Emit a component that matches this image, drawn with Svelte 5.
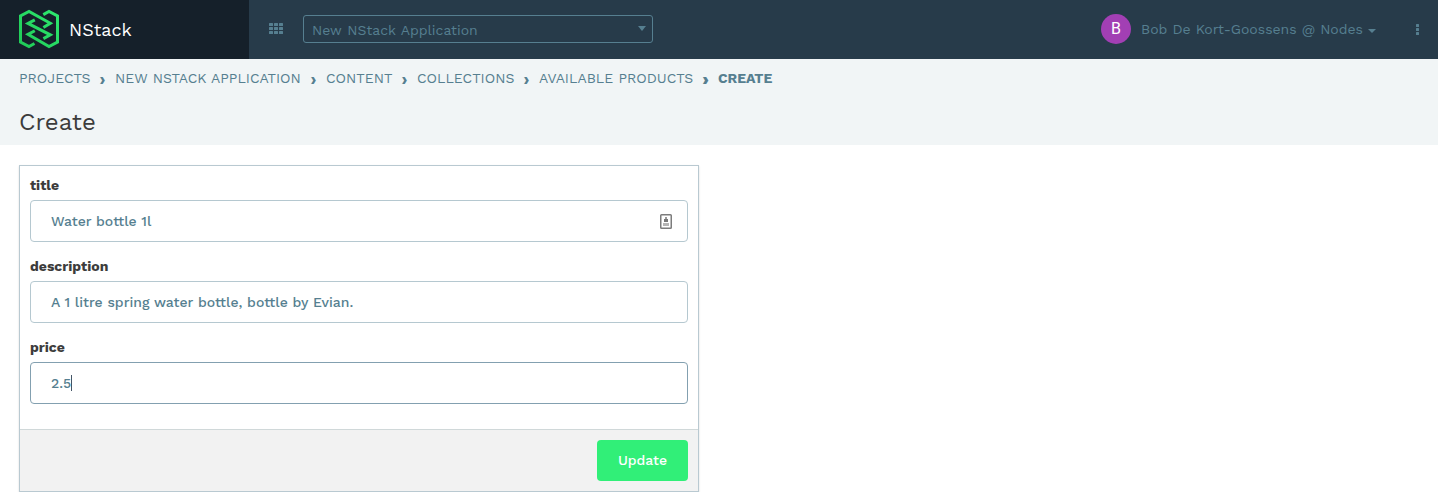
<script>
  const crumbs = [
    { label: 'PROJECTS', width: 71 },
    { label: 'NEW NSTACK APPLICATION', width: 186 },
    { label: 'CONTENT', width: 66 },
    { label: 'COLLECTIONS', width: 97 },
    { label: 'AVAILABLE PRODUCTS', width: 154 },
    { label: 'CREATE', width: 54 }
  ];
</script>

<header class="topbar">
  <div class="brand">
    <svg class="logo" width="42" height="40" viewBox="18 9 42 40" fill="none" stroke-width="3">
      <defs>
        <linearGradient id="green" x1="20" y1="48" x2="58" y2="10" gradientUnits="userSpaceOnUse">
          <stop stop-color="#1fc956" /><stop offset="1" stop-color="#2eea70" />
        </linearGradient>
      </defs>
      <g stroke="url(#green)">
        <path d="M34.5 43.5 29 46.5 20.5 42V15.8L29 11.5 50.3 23.3 43.4 27.5" />
        <path d="M34.8 19.8 28 23.4 50.3 34.9 43.4 38.6" />
        <path d="M34.8 30.7 28 34.4 49 46.5 57.5 42V15.8L49 11.5 43.3 14.6" />
      </g>
    </svg>
    <span class="brand-name">NStack</span>
  </div>
  <svg class="grid" width="14" height="11" viewBox="0 0 14 11" fill="#567f90">
    {#each [0, 4, 8] as y}{#each [0, 5, 10] as x}<rect {x} {y} width="4" height="3" rx=".5" />{/each}{/each}
  </svg>
  <div class="select"><span>New NStack Application</span><i class="caret big"></i></div>
  <div class="user">
    <span class="avatar">B</span>
    <span class="user-name">Bob De Kort-Goossens @ Nodes</span>
    <i class="caret"></i>
  </div>
  <svg class="dots" width="3" height="11" viewBox="0 0 3 11" fill="#567f90">
    {#each [0, 4, 8] as y}<rect {y} width="3" height="3" rx=".5" />{/each}
  </svg>
</header>

<section class="heading">
  <nav>
    {#each crumbs as crumb, i}
      {#if i}<span class="sep" class:heavy={i === 5}>›</span>{/if}
      <span class="crumb" class:strong={i === 5} style:width="{crumb.width}px">{crumb.label}</span>
    {/each}
  </nav>
  <h1>Create</h1>
</section>

<main>
  <div class="panel">
    <div class="fields">
      <div class="label">title</div>
      <div class="input"><span>Water bottle 1l</span>
        <svg class="card" width="12" height="15" viewBox="0 0 12 15">
          <rect x=".75" y=".75" width="10.5" height="13.5" rx=".8" fill="#fff" stroke="#7c7c7c" stroke-width="1.5" />
          <rect x="5" y="3" width="2" height="2" fill="#999" /><rect x="4" y="5" width="4" height="3" fill="#777" />
          <rect x="3" y="9" width="6" height="3" fill="#b4b4b4" />
        </svg>
      </div>
      <div class="label">description</div>
      <div class="input"><span>A 1 litre spring water bottle, bottle by Evian.</span></div>
      <div class="label">price</div>
      <div class="input focus"><span>2.5</span><i class="cursor"></i></div>
    </div>
    <footer><button>Update</button></footer>
  </div>
</main>

<style>
  :global(body) { margin: 0; background: #fff; color: #3c3c3c; font-family: "Work Sans", Inter, sans-serif; font-size: 14px; }
  .topbar { height: 59px; display: flex; align-items: center; background: #273b4a; color: #567f90; }
  .brand { box-sizing: border-box; width: 249px; height: 59px; padding: 0 0 1px 18px; display: flex; align-items: center; background: #15202a; color: #fff; flex: none; }
  .brand-name { font-size: 18px; margin: 1px 0 0 9px; }
  .grid { margin: 0 20px; position: relative; top: -1px; }
  .select { box-sizing: border-box; width: 350px; height: 28px; margin-bottom: 1px; border: 1px solid #567f90; border-radius: 3px; padding: 2px 6px 0 8px; display: flex; align-items: center; justify-content: space-between; word-spacing: .9px; }
  .caret { border: 4px solid transparent; border-top-color: #567f90; border-bottom: 0; margin-left: 5px; margin-top: 4px; }
  .big { border-top-width: 5px; margin-top: -3px; }
  .user { margin-left: auto; padding-bottom: 1px; display: flex; align-items: center; word-spacing: .3px; }
  .avatar { width: 30px; height: 30px; line-height: 30px; border-radius: 50%; background: #a23fb4; color: #fff; text-align: center; font-size: 16px; margin-right: 10px; font-family: Roboto, sans-serif; }
  .dots { margin: 0 19px 1px 40px; }
  .heading { height: 86px; background: #f1f5f6; padding-left: 19px; }
  nav { height: 38px; display: flex; align-items: center; color: #567f90; }
  .crumb { white-space: nowrap; word-spacing: .6px; }
  .sep { width: 25px; text-align: center; font-size: 17px; font-weight: 700; padding-top: 2px; }
  .strong { font-weight: 700; }
  .heavy { font-weight: 900; }
  h1 { margin: 0; font-size: 24px; font-weight: 400; line-height: 50px; }
  main { padding: 20px 0 0 19px; }
  .panel { box-sizing: border-box; width: 680px; height: 327px; border: 1px solid #b9c9d1; box-shadow: 0 1px 2px #0002; display: flex; flex-direction: column; }
  .fields { padding: 0 10px; flex: 1; }
  .label { box-sizing: border-box; height: 34px; padding-top: 9px; line-height: 20px; font-weight: 700; }
  .input { box-sizing: border-box; height: 42px; border: 1px solid #b5c8d0; border-radius: 4px; padding: 0 15px 0 20px; display: flex; align-items: center; color: #567f90; margin-bottom: 5px; font-weight: 500; word-spacing: .25px; }
  .card { margin-left: auto; }
  .focus { border-color: #83a0b0; }
  .cursor { width: 1px; height: 16px; background: #456; }
  footer { box-sizing: border-box; height: 62px; border-top: 1px solid #d0d8d9; background: #f2f2f2; display: flex; justify-content: flex-end; padding: 10px; }
  button { width: 91px; height: 41px; border: 0; border-radius: 4px; padding: 0 0 2px; background: #31ef78; color: #fff; font: 500 14px "Work Sans", sans-serif; }
</style>
